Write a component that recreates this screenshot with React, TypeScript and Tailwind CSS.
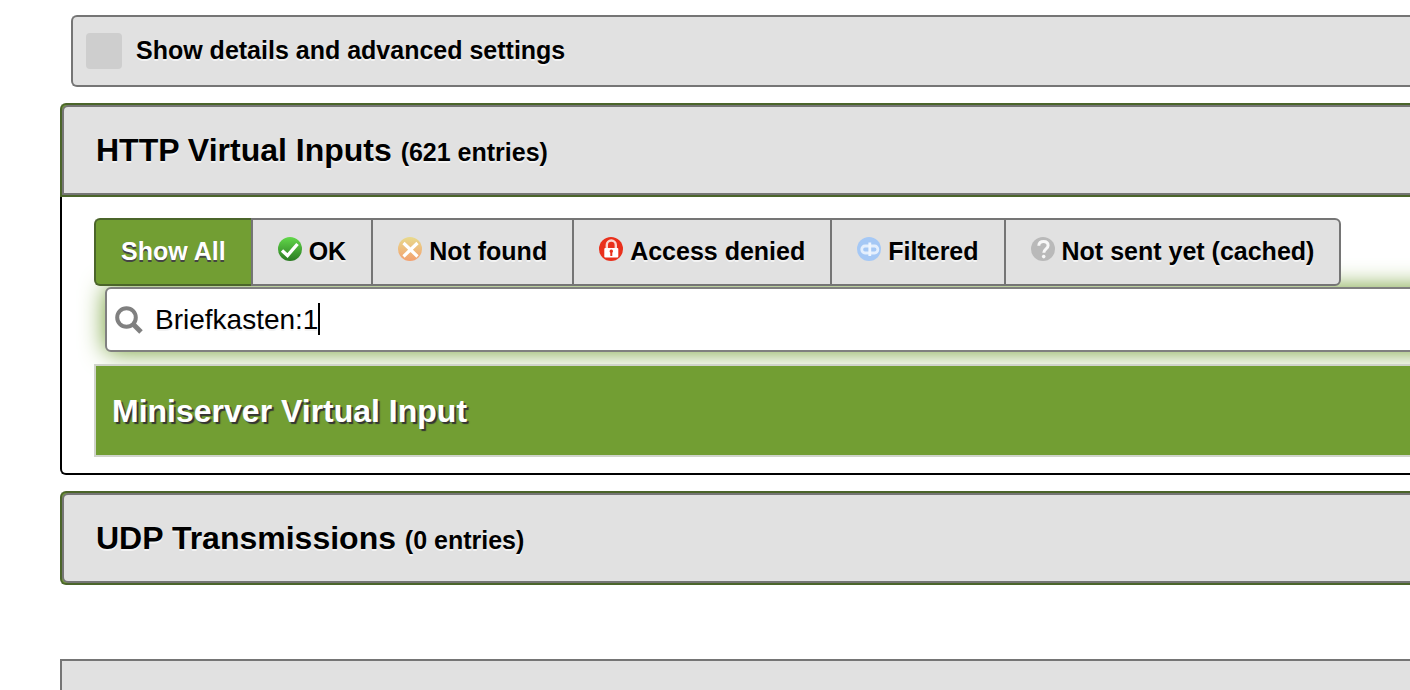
import React, { useState } from 'react';

const OkIcon = () => (
  <svg className="w-6 h-6 mb-1.5" viewBox="0 0 24 24" aria-hidden="true">
    <defs>
      <linearGradient id="ok-fill" x1="0" y1="0" x2="0" y2="1">
        <stop offset="0" stopColor="#62d84a" />
        <stop offset="1" stopColor="#2b7a22" />
      </linearGradient>
    </defs>
    <circle cx="12" cy="12" r="12" fill="url(#ok-fill)" />
    <path d="M4 13.5 9.5 18.5 19.5 7" fill="none" stroke="#fff" strokeWidth="3.4" />
  </svg>
);

const NotFoundIcon = () => (
  <svg className="w-6 h-6 mb-1.5" viewBox="0 0 24 24" aria-hidden="true">
    <defs>
      <linearGradient id="missing-fill" x1="0" y1="0" x2="0" y2="1">
        <stop offset="0" stopColor="#e8da8c" />
        <stop offset="1" stopColor="#f3a070" />
      </linearGradient>
    </defs>
    <circle cx="12" cy="12" r="12" fill="url(#missing-fill)" />
    <path d="M5.5 6 19.5 19.5M19.5 6 5.5 19.5" fill="none" stroke="#fff" strokeWidth="3.2" />
  </svg>
);

const DeniedIcon = () => (
  <svg className="w-6 h-6 mb-1.5" viewBox="0 0 24 24" aria-hidden="true">
    <circle cx="12" cy="12" r="12" fill="#e9301c" />
    <path d="M7.8 11.5V8a4.5 4.5 0 0 1 9 0v3.5" fill="none" stroke="#fbd5d0" strokeWidth="2.4" />
    <rect x="5.3" y="11" width="14" height="9.5" rx="1" fill="#fff" />
    <path d="M12.3 12.6a1.7 1.7 0 0 1 1 3.1V19h-2v-3.3a1.7 1.7 0 0 1 1-3.1Z" fill="#e9301c" />
  </svg>
);

const FilteredIcon = () => (
  <svg className="w-6 h-6 mb-1.5" viewBox="0 0 24 24" aria-hidden="true">
    <circle cx="12" cy="12" r="12" fill="#a5c8f5" />
    <rect x="4.8" y="9" width="16" height="7" rx="3.2" fill="none" stroke="#e4effd" strokeWidth="2.8" />
    <path d="M12.8 5.5v13.5" stroke="#eef5fe" strokeWidth="2.8" />
  </svg>
);

const CachedIcon = () => (
  <svg className="w-6 h-6 mb-1.5" viewBox="0 0 24 24" aria-hidden="true">
    <circle cx="12" cy="12" r="12" fill="#b9b9b9" />
    <path
      d="M7.8 8.8C7.8 5.8 9.8 4.5 12.5 4.5s4.6 1.5 4.6 4c0 3.4-4.3 3.3-4.3 7.2"
      fill="none"
      stroke="#f7f7f7"
      strokeWidth="3"
    />
    <circle cx="12.7" cy="19.6" r="1.8" fill="#f7f7f7" />
  </svg>
);

const filters = [
  { label: 'Show All', icon: null },
  { label: 'OK', icon: <OkIcon /> },
  { label: 'Not found', icon: <NotFoundIcon /> },
  { label: 'Access denied', icon: <DeniedIcon /> },
  { label: 'Filtered', icon: <FilteredIcon /> },
  { label: 'Not sent yet (cached)', icon: <CachedIcon /> },
];

type HeadingProps = {
  title: string;
  entries: number;
  open: boolean;
  onToggle: () => void;
};

const CollapsibleHeading: React.FC<HeadingProps> = ({ title, entries, open, onToggle }) => (
  <h2
    className={`border-2 border-r-0 border-[#4b652a] bg-[#729e33] rounded-tl-md ${open ? '' : 'rounded-bl-md'}`}
  >
    <button
      type="button"
      aria-expanded={open}
      onClick={onToggle}
      className={`block w-full h-[90px] pl-8 text-left border-2 border-r-0 border-[#757575] bg-[#e1e1e1] text-[32px] font-bold text-shadow-[0_2px_0_#f3f3f3] rounded-tl-md ${open ? '' : 'rounded-bl-md'}`}
    >
      {title} <span className="text-[25px]">({entries} entries)</span>
    </button>
  </h2>
);

const App: React.FC = () => {
  const [details, setDetails] = useState(false);
  const [active, setActive] = useState('Show All');
  const [query, setQuery] = useState('Briefkasten:1');
  const [httpOpen, setHttpOpen] = useState(true);
  const [udpOpen, setUdpOpen] = useState(false);

  return (
    <main className="flex flex-col min-h-screen pt-[15px] pl-[60px] overflow-hidden bg-white text-black font-['Liberation_Sans',Arial,sans-serif]">
      <label className="flex items-center gap-3.5 h-[72px] ml-[11px] pl-[13px] border-2 border-r-0 border-[#757575] rounded-l-md bg-[#e1e1e1] text-[25px] font-bold text-shadow-[0_2px_0_#f3f3f3]">
        <input
          type="checkbox"
          checked={details}
          onChange={(e) => setDetails(e.target.checked)}
          className="appearance-none w-9 h-9 rounded bg-[#cecece] checked:bg-[#729e33]"
        />
        Show details and advanced settings
      </label>

      <section className="mt-4">
        <CollapsibleHeading
          title="HTTP Virtual Inputs"
          entries={621}
          open={httpOpen}
          onToggle={() => setHttpOpen(!httpOpen)}
        />
        {httpOpen && (
          <div className="pt-[21px] pb-4 pl-8 border-l-2 border-b-2 border-black rounded-bl-md">
            <div className="relative z-10 flex w-max" role="group" aria-label="Filter by status">
              {filters.map((filter) => (
                <button
                  key={filter.label}
                  type="button"
                  aria-pressed={active === filter.label}
                  onClick={() => setActive(filter.label)}
                  className={`flex items-center gap-[7px] h-[68px] px-[25px] border-y-2 border-l-2 first:rounded-l-md last:rounded-r-md last:border-r-2 text-[25px] font-bold ${
                    active === filter.label
                      ? 'border-[#4b652a] bg-[#729e33] text-white text-shadow-[0_2px_0_#444444]'
                      : 'border-[#757575] bg-[#e1e1e1] text-shadow-[0_2px_0_#f3f3f3]'
                  }`}
                >
                  {filter.icon}
                  {filter.label}
                </button>
              ))}
            </div>

            <div className="relative flex items-center h-[65px] mt-px ml-[11px] -mr-10 pl-2 border-2 border-[#808080] rounded-md bg-white shadow-[0_0_24px_#729e33]">
              <svg className="w-7 h-7" viewBox="0 0 28 28" fill="none" stroke="#808080" aria-hidden="true">
                <circle cx="11.5" cy="11.5" r="9.3" strokeWidth="4" />
                <path d="M18 18l8 8" strokeWidth="5" />
              </svg>
              <input
                type="text"
                aria-label="Filter entries"
                value={query}
                onChange={(e) => setQuery(e.target.value)}
                className="flex-1 h-full pl-3 text-[28px] outline-none caret-transparent text-shadow-[0_2px_0_#f3f3f3]"
              />
              <span className="absolute left-[211px] top-3.5 w-0.5 h-8 bg-black" />
            </div>

            <table className="relative w-full mt-3 border-2 border-r-0 border-[#d0d4cb] border-separate border-spacing-0">
              <thead>
                <tr>
                  <th className="h-[89px] pl-4 text-left bg-[#729e33] text-white text-[32px] font-bold text-shadow-[2px_2px_1px_#333333]">
                    Miniserver Virtual Input
                  </th>
                </tr>
              </thead>
            </table>
          </div>
        )}
      </section>

      <section className="mt-4">
        <CollapsibleHeading
          title="UDP Transmissions"
          entries={0}
          open={udpOpen}
          onToggle={() => setUdpOpen(!udpOpen)}
        />
      </section>

      <footer className="flex-1 mt-[74px] border-t-2 border-l-2 border-[#757575] bg-[#e1e1e1]" />
    </main>
  );
};

export default App;
